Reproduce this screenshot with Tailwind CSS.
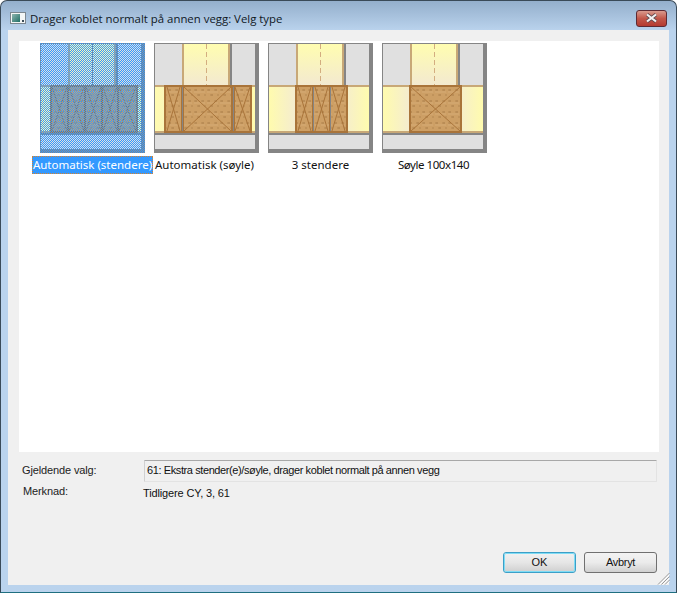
<!doctype html>
<html>
<head>
<meta charset="utf-8">
<script src="https://cdn.jsdelivr.net/npm/@tailwindcss/browser@4"></script>
</head>
<body class="m-0 bg-white overflow-hidden">
<svg width="0" height="0" class="absolute">
  <defs>
    <linearGradient id="yel" x1="0" y1="0" x2="0" y2="1"><stop offset="0" stop-color="#fffdb0"/><stop offset="1" stop-color="#f3e9d0"/></linearGradient>
    <linearGradient id="yelL" x1="0" y1="0" x2="1" y2="0"><stop offset="0" stop-color="#fffbae"/><stop offset="1" stop-color="#f4ecd0"/></linearGradient>
    <linearGradient id="yelR" x1="0" y1="0" x2="1" y2="0"><stop offset="0" stop-color="#f4ecd0"/><stop offset="1" stop-color="#fffbae"/></linearGradient>
    <linearGradient id="ico" x1="0" y1="0" x2="1" y2="1"><stop offset="0" stop-color="#8fb5b0"/><stop offset="1" stop-color="#1f6f66"/></linearGradient>
    <pattern id="wood" width="13" height="11" patternUnits="userSpaceOnUse">
      <rect width="13" height="11" fill="#cd9f65"/>
      <path d="M1 3h3M3 2v2M8 3h3M10 2v2M4 8h3M6 7v2M11 8h2" stroke="#b48750" stroke-width="1" fill="none"/>
      <path d="M1 5h11" stroke="#d5ab74" stroke-width="1" fill="none"/>
    </pattern>
    <pattern id="dither" width="2" height="2" patternUnits="userSpaceOnUse">
      <rect width="1" height="1" fill="#3399ff"/><rect x="1" y="1" width="1" height="1" fill="#3399ff"/>
    </pattern>
    <g id="base">
      <rect width="105" height="110" fill="#858585"/>
      <rect x="1" y="1" width="27" height="41" fill="#e0e0e0"/>
      <rect x="78" y="1" width="23" height="41" fill="#e0e0e0"/>
      <rect x="28" y="1" width="2" height="41" fill="#c8a877"/>
      <rect x="30" y="1" width="44" height="41" fill="url(#yel)"/>
      <rect x="74" y="1" width="2" height="41" fill="#c8a877"/>
      <rect x="1" y="42" width="100" height="2" fill="#c8a877"/>
      <rect x="1" y="44" width="27" height="44" fill="url(#yelL)"/>
      <rect x="74" y="44" width="27" height="44" fill="url(#yelR)"/>
      <rect x="1" y="88" width="100" height="2" fill="#c8a877"/>
      <rect x="1" y="92" width="100" height="14" fill="#e0e0e0"/>
    </g>
    <path id="dash" d="M52.5 1V42" stroke="#d3ad80" stroke-width="1" stroke-dasharray="5 3" fill="none"/>
  </defs>
</svg>

<div class="relative w-[677px] h-[593px] flex flex-col rounded-t-[7px] border border-[#3a4a58] border-b-[#1f6f80] bg-gradient-to-b from-[#94afcc] to-[#bad3ed] to-[5%] font-['Open_Sans','Noto_Sans',sans-serif] text-[12px] text-black">
  <div class="h-[29px] shrink-0 flex items-center pl-[29px] pr-[9px] relative">
    <svg class="absolute left-[9px] top-[11px]" width="16" height="12" viewBox="0 0 16 12" shape-rendering="crispEdges">
      <rect x="0.5" y="0.5" width="15" height="11" fill="#f4f6f6" stroke="#7c8790"/>
      <rect x="2" y="2" width="8" height="8" fill="url(#ico)"/>
      <rect x="12" y="8" width="2" height="2" fill="#3b4c58"/>
    </svg>
    <span class="text-[11.4px] leading-none mt-[7px] whitespace-nowrap text-[#10181f]">Drager koblet normalt på annen vegg: Velg type</span>
    <div class="ml-auto mt-[5px] w-[31px] h-[17px] rounded-[3px] border border-[#5e2a33] bg-gradient-to-b from-[#d99a8e] via-[#c2574a] to-[#b43a30] flex items-center justify-center">
      <svg width="13" height="10" viewBox="0 0 13 10"><path d="M2 1.5L11 8.5M11 1.5L2 8.5" stroke="#5d4a50" stroke-width="3.6" fill="none"/><path d="M2 1.5L11 8.5M11 1.5L2 8.5" stroke="#f4f2f2" stroke-width="2.2" fill="none"/></svg>
    </div>
  </div>

  <div class="mx-[7px] flex-1 mb-[7px] bg-[#f0f0f0] flex flex-col px-[11px] pt-[11px] text-[#111]">
    <div class="w-[640px] h-[411px] bg-white shrink-0 flex pl-[21px] pt-[2px] gap-[9px] font-['Noto_Sans','Open_Sans',sans-serif] text-[11.5px]">

      <div class="w-[105px] flex flex-col items-center">
        <svg width="105" height="110" viewBox="0 0 105 110" shape-rendering="crispEdges">
          <use href="#base"/>
          <path d="M52.5 1V42" stroke="#858585"/>
          <g stroke="#a9743a" stroke-width="2">
            <rect x="11" y="43" width="17" height="46" fill="url(#wood)"/>
            <rect x="28" y="43" width="17" height="46" fill="url(#wood)"/>
            <rect x="45" y="43" width="17" height="46" fill="url(#wood)"/>
            <rect x="62" y="43" width="16" height="46" fill="url(#wood)"/>
            <rect x="78" y="43" width="19" height="46" fill="url(#wood)"/>
          </g>
          <path d="M12 44L27 88M27 44L12 88M29 44L44 88M44 44L29 88M46 44L61 88M61 44L46 88M63 44L77 88M77 44L63 88M79 44L96 88M96 44L79 88" stroke="#a9743a" fill="none" shape-rendering="auto"/>
          <rect width="105" height="110" fill="url(#dither)"/>
        </svg>
        <div class="mt-[3px] h-[18px] flex items-center justify-center whitespace-nowrap bg-[#3399ff] text-white border border-dotted border-[#d9822b] leading-none">Automatisk (stendere)</div>
      </div>

      <div class="w-[105px] flex flex-col items-center">
        <svg width="105" height="110" viewBox="0 0 105 110" shape-rendering="crispEdges">
          <use href="#base"/>
          <use href="#dash"/>
          <rect x="76" y="1" width="2" height="41" fill="#858585"/>
          <g stroke="#a9743a" stroke-width="2">
            <rect x="11" y="43" width="17" height="46" fill="url(#wood)"/>
            <rect x="29" y="43" width="49" height="46" fill="url(#wood)"/>
            <rect x="80" y="43" width="17" height="46" fill="url(#wood)"/>
          </g>
          <path d="M13 44L26 88M26 44L13 88M30 44L77 88M77 44L30 88M81 44L96 88M96 44L81 88" stroke="#a9743a" fill="none" shape-rendering="auto"/>
          <rect x="28" y="44" width="1" height="44" fill="#858585"/>
          <rect x="78.5" y="44" width="1" height="44" fill="#858585"/>
        </svg>
        <div class="mt-[3px] mr-[4px] h-[18px] flex items-center justify-center whitespace-nowrap leading-none">Automatisk (søyle)</div>
      </div>

      <div class="w-[105px] flex flex-col items-center">
        <svg width="105" height="110" viewBox="0 0 105 110" shape-rendering="crispEdges">
          <use href="#base"/>
          <use href="#dash"/>
          <rect x="76" y="1" width="2" height="41" fill="#858585"/>
          <g stroke="#a9743a" stroke-width="2">
            <rect x="28" y="43" width="17" height="46" fill="url(#wood)"/>
            <rect x="45" y="43" width="17" height="46" fill="url(#wood)"/>
            <rect x="62" y="43" width="17" height="46" fill="url(#wood)"/>
          </g>
          <path d="M30 44L43 88M43 44L30 88M47 44L60 88M60 44L47 88M64 44L77 88M77 44L64 88" stroke="#a9743a" fill="none" shape-rendering="auto"/>
          <rect x="45" y="44" width="1" height="44" fill="#858585"/>
          <rect x="62" y="44" width="1" height="44" fill="#858585"/>
        </svg>
        <div class="mt-[3px] h-[18px] flex items-center justify-center whitespace-nowrap leading-none">3 stendere</div>
      </div>

      <div class="w-[105px] flex flex-col items-center">
        <svg width="105" height="110" viewBox="0 0 105 110" shape-rendering="crispEdges">
          <use href="#base"/>
          <use href="#dash"/>
          <rect x="76" y="1" width="2" height="41" fill="#858585"/>
          <rect x="28" y="43" width="51" height="46" fill="url(#wood)" stroke="#a9743a" stroke-width="2"/>
          <path d="M29 44L78 88M78 44L29 88" stroke="#a9743a" fill="none" shape-rendering="auto"/>
        </svg>
        <div class="mt-[3px] mr-[2px] h-[18px] flex items-center justify-center whitespace-nowrap leading-none tracking-[-0.45px]">Søyle 100x140</div>
      </div>
    </div>

    <div class="flex mt-[8px] h-[22px] font-['Liberation_Sans',sans-serif] text-[11px] tracking-[-0.13px]">
      <div class="w-[125px] pl-[3px] pb-[2px] flex items-center shrink-0 text-[#222]">Gjeldende valg:</div>
      <div class="w-[513px] border border-[#e3e3e3] border-t-[#a8a8a8] border-l-[#d0d0d0] rounded-[1px] pl-[2px] pb-[1px] flex items-center whitespace-nowrap tracking-[-0.4px]">61: Ekstra stender(e)/søyle, drager koblet normalt på annen vegg</div>
    </div>
    <div class="flex mt-[2px] h-[20px] font-['Liberation_Sans',sans-serif] text-[11px] leading-[14px] tracking-[-0.13px]">
      <div class="w-[124px] pl-[4px] shrink-0 text-[#222]">Merknad:</div>
      <div class="pt-[2px]">Tidligere CY, 3, 61</div>
    </div>

    <div class="mt-auto mb-[12px] flex justify-end gap-[8px] pr-[1px] font-['Liberation_Sans',sans-serif]">
      <button class="w-[73px] h-[21px] rounded-[3px] border border-[#3c9fc7] outline outline-1 -outline-offset-2 outline-[#7fdcf5] bg-gradient-to-b from-[#f1f1f1] via-[#e6e6e6] to-[#cfcfcf] leading-none text-[11px]">OK</button>
      <button class="w-[73px] h-[21px] rounded-[3px] border border-[#707070] bg-gradient-to-b from-[#f3f3f3] via-[#ebebeb] to-[#d0d0d0] leading-none text-[11px] tracking-[-0.3px]">Avbryt</button>
    </div>
  </div>

  <svg class="absolute right-[6px] bottom-[7px]" width="13" height="13" viewBox="0 0 13 13"><path d="M12.5 1L1 12.5M12.5 4.5L4.5 12.5M12.5 8L8 12.5" stroke="#9a9a9a" stroke-width="1" fill="none"/><path d="M12.5 2.5L2.5 12.5M12.5 6L6 12.5M12.5 9.5L9.5 12.5" stroke="#ffffff" stroke-width="1" fill="none"/></svg>
</div>
</body>
</html>
